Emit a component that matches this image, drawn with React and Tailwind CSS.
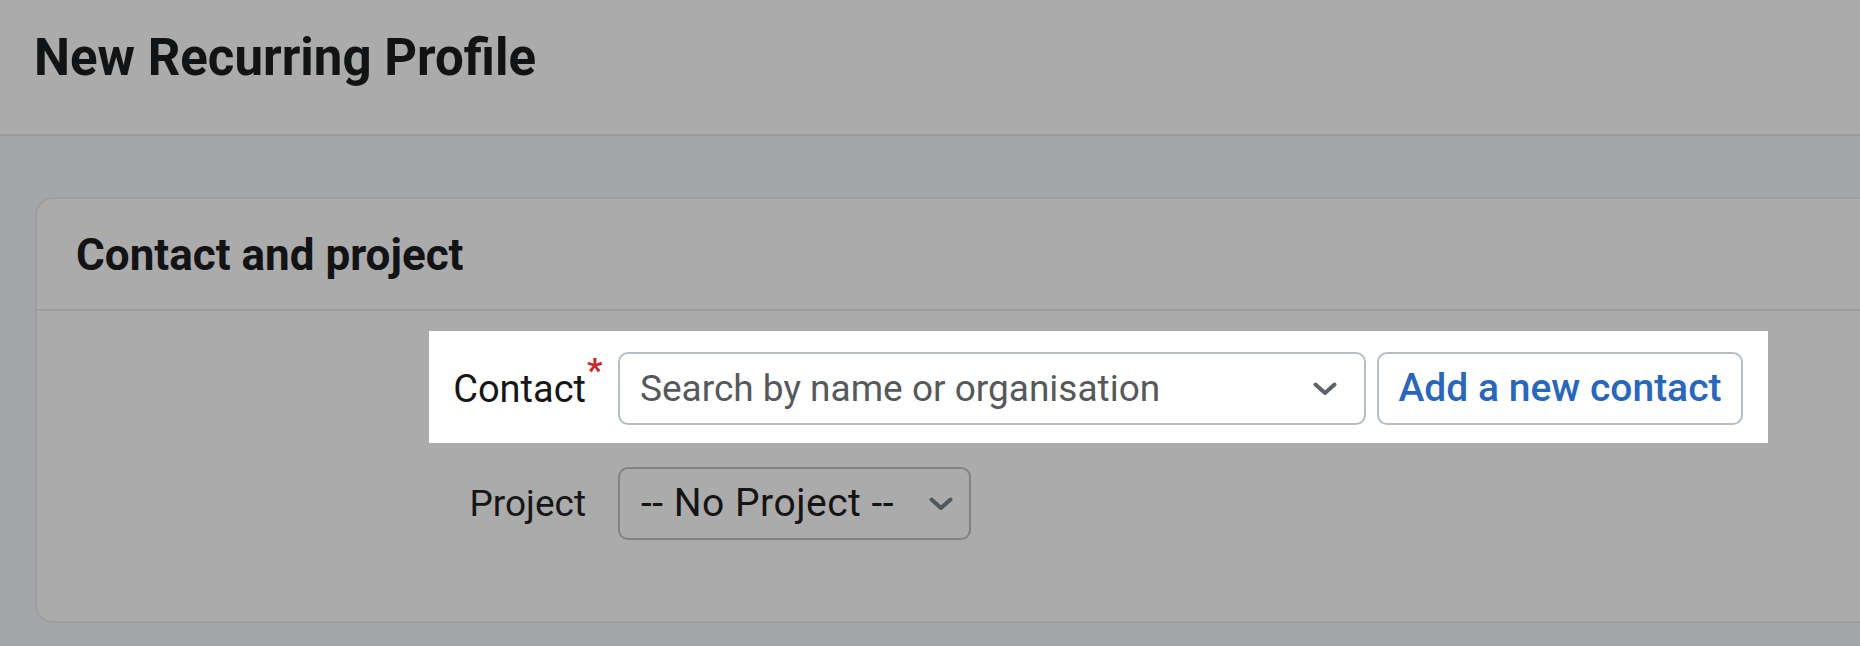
import React from "react";

function Chevron({ className }) {
  return (
    <svg className={className} width="24" height="14" viewBox="0 0 24 14" fill="none">
      <polyline points="2.5,2.5 12,11 21.5,2.5" stroke="currentColor" strokeWidth="4" strokeLinecap="round" strokeLinejoin="round" />
    </svg>
  );
}

export default function App() {
  const font = { fontFamily: "Roboto, 'Noto Sans', sans-serif" };
  return (
    <div className="w-[1860px] h-[646px] overflow-hidden bg-[#a4a6a9]" style={font}>
      <header className="h-[136px] bg-[#ababab] border-b-2 border-[#9b9ca0] pl-[34px] flex items-center">
        <h1 className="text-[51px] font-bold text-[#121314] leading-none -mt-[19px]">New Recurring Profile</h1>
      </header>
      <main className="pt-[61px] pl-[35px]">
        <section className="bg-[#ababab] border-2 border-r-0 border-[#9d9ea2] rounded-l-[18px]">
          <div className="h-[112px] border-b-2 border-[#9d9ea2] pl-[39px] flex items-center">
            <h2 className="text-[44px] font-bold text-[#121314] leading-none mt-[2px]">Contact and project</h2>
          </div>
          <div className="pt-[20px] pb-[81px] pl-[392px]">
            <div className="w-fit bg-white pl-[24px] pr-[25px] pt-[21px] pb-[18px] flex items-center">
              <label className="relative w-[133px] text-right text-[38px] text-[#161616] leading-none">
                Contact
                <span className="absolute left-full top-[-17px] ml-[1px] text-[34px] font-bold text-[#c42b2b] leading-none">*</span>
              </label>
              <div className="ml-[32px] w-[748px] h-[73px] border-2 border-[#b6bdc3] rounded-[10px] flex items-center pl-[20px] pr-[27px]">
                <span className="flex-1 text-[37px] text-[#56595c] leading-none">Search by name or organisation</span>
                <Chevron className="text-[#5b646b]" />
              </div>
              <button className="ml-[11px] w-[366px] h-[73px] border-2 border-[#b6bdc3] rounded-[10px] flex items-center justify-center text-[39px] font-medium text-[#2a66b9] leading-none">
                Add a new contact
              </button>
            </div>
            <div className="mt-[24px] pl-[24px] flex items-center">
              <label className="w-[133px] text-right text-[37px] text-[#161616] leading-none">Project</label>
              <div className="ml-[32px] w-[353px] h-[73px] border-2 border-[#7e8387] rounded-[10px] flex items-center pl-[21px] pr-[16px]">
                <span className="flex-1 text-[39px] tracking-[0.5px] text-[#141414] leading-none">-- No Project --</span>
                <Chevron className="text-[#50575d]" />
              </div>
            </div>
          </div>
        </section>
      </main>
    </div>
  );
}
